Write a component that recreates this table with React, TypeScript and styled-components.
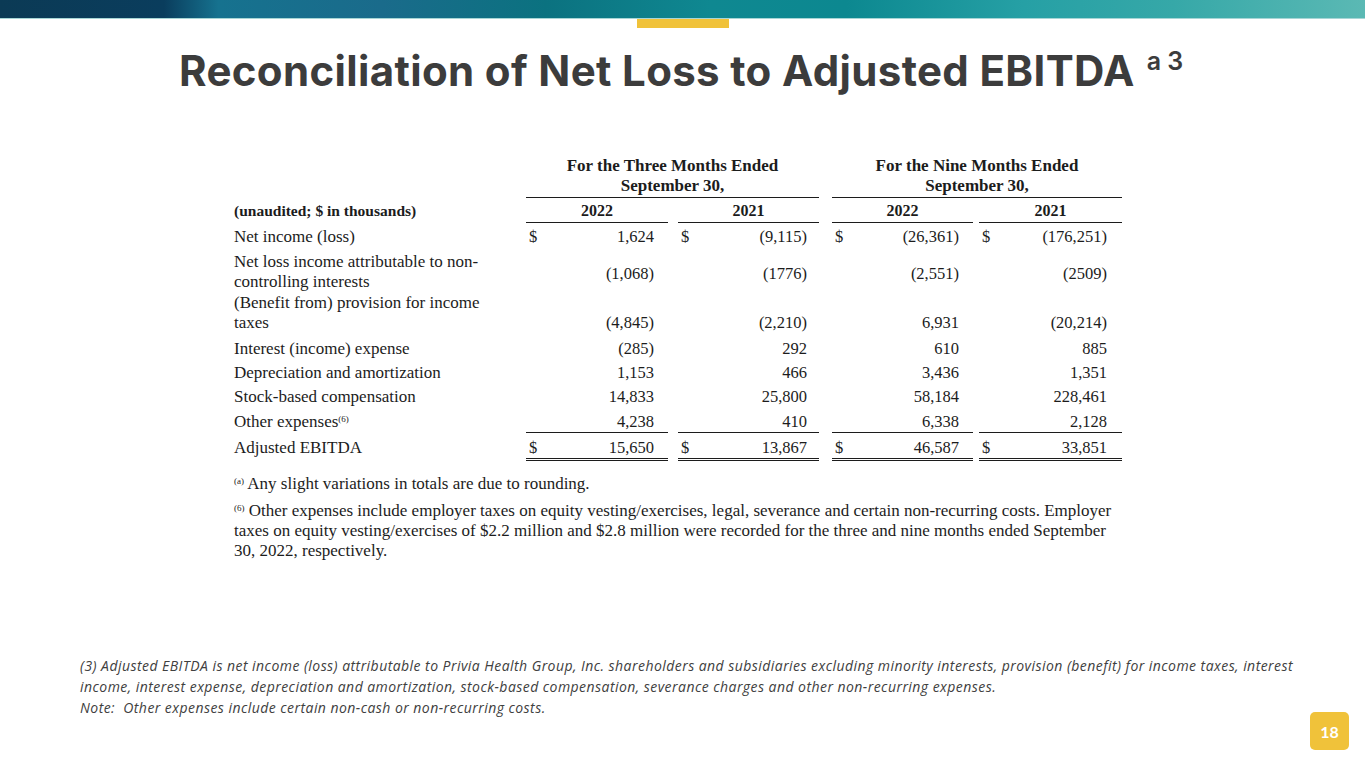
import React from "react";
import styled, { createGlobalStyle } from "styled-components";

const GlobalStyle = createGlobalStyle`
  html, body { margin: 0; padding: 0; background: #ffffff; }
  #root { width: 1365px; }
`;

const COLS = "292px 142px 151px 154px 149px";

const Slide = styled.div`
  width: 1365px;
  height: 768px;
  overflow: hidden;
  background: #ffffff;
  display: flex;
  flex-direction: column;
`;

const TopBar = styled.div`
  height: 18px;
  flex: none;
  background: linear-gradient(
    90deg,
    #0b3a55 0%,
    #0a3d5d 12%,
    #16728f 16%,
    #1a6b8b 28%,
    #0b7280 40%,
    #0f8891 52%,
    #0c8890 62%,
    #26a0a5 75%,
    #36a8a8 86%,
    #5bb9b4 100%
  );
  border-bottom: 1px solid #a7d6d6;
`;

const Tab = styled.div`
  width: 92px;
  height: 9px;
  flex: none;
  margin: 0 auto;
  background: #f0c23a;
`;

const Title = styled.h1`
  margin: 19px 0 0 179px;
  font-family: Inter, "Open Sans", sans-serif;
  font-weight: 700;
  font-size: 42px;
  letter-spacing: 0.35px;
  line-height: 48px;
  color: #3c3c3c;
  white-space: nowrap;
`;

const TitleSup = styled.sup`
  font-size: 25px;
  font-weight: 600;
  letter-spacing: 0;
  vertical-align: 16px;
  margin-left: 12px;
  line-height: 0;
`;

const TableWrap = styled.div`
  margin: 61px 0 0 234px;
  font-family: "Liberation Serif", "Times New Roman", serif;
  font-size: 17px;
  color: #1c1c1c;
`;

const Row = styled.div`
  display: grid;
  grid-template-columns: ${COLS};
`;

const GroupHead = styled.div<{ $gap: number }>`
  grid-column: span 2;
  margin-left: ${(p) => p.$gap}px;
  text-align: center;
  font-weight: 700;
  line-height: 20px;
  padding-bottom: 1px;
  border-bottom: 1px solid #1c1c1c;
`;

const YearHead = styled.div<{ $gap: number }>`
  margin-left: ${(p) => p.$gap}px;
  text-align: center;
  font-weight: 700;
  font-size: 16px;
  line-height: 20px;
  padding: 3px 0 1px;
  border-bottom: 1px solid #1c1c1c;
`;

const UnitLabel = styled.div`
  font-weight: 700;
  font-size: 15.5px;
  line-height: 20px;
  padding-top: 3px;
  white-space: nowrap;
`;

const Label = styled.div<{ $pt: number; $pb: number }>`
  line-height: 20px;
  padding: ${(p) => p.$pt}px 0 ${(p) => p.$pb}px;
  white-space: nowrap;
`;

const FnSup = styled.sup`
  font-size: 9px;
  vertical-align: 5px;
  line-height: 0;
`;

const Amount = styled.div<{
  $gap: number;
  $pr: number;
  $rule?: "single" | "double";
  $shift: number;
}>`
  margin-left: ${(p) => p.$gap}px;
  padding: ${(p) => p.$shift}px ${(p) => p.$pr}px 0 3px;
  display: flex;
  justify-content: space-between;
  align-items: flex-start;
  font-size: 16.5px;
  line-height: 20px;
  white-space: nowrap;
  border-bottom: ${(p) =>
    p.$rule === "single" ? "1px solid #1c1c1c" : p.$rule === "double" ? "3px double #1c1c1c" : "none"};
`;

const Footnotes = styled.div`
  margin: 13px 0 0 234px;
  width: 900px;
  font-family: "Liberation Serif", "Times New Roman", serif;
  font-size: 17px;
  line-height: 20px;
  color: #1c1c1c;
  display: flex;
  flex-direction: column;
  gap: 7px;
`;

const Note = styled.p`
  margin: 0;
  white-space: nowrap;
`;

const Footer = styled.div`
  margin-top: 94px;
  display: flex;
  align-items: flex-start;
  justify-content: space-between;
`;

const Disclaimer = styled.p`
  margin: 0 0 0 80px;
  font-family: "Open Sans", Lato, sans-serif;
  font-style: italic;
  font-size: 14px;
  letter-spacing: 0.45px;
  line-height: 21px;
  color: #404040;
  white-space: nowrap;
`;

const PageBadge = styled.div`
  margin: 57px 16px 0 0;
  width: 39px;
  height: 38px;
  border-radius: 5px;
  background: #f0c23a;
  color: #ffffff;
  font-family: Lato, "Open Sans", sans-serif;
  font-weight: 700;
  font-size: 16px;
  display: flex;
  align-items: center;
  justify-content: center;
`;

type RowData = {
  label: React.ReactNode;
  values: [string, string, string, string];
  dollar?: boolean;
  pt: number;
  pb: number;
  shift: number;
  rule?: "single" | "double";
};

const GAPS = [0, 10, 13, 6];
const PRS = [14, 12, 14, 15];

const rows: RowData[] = [
  { label: "Net income (loss)", values: ["1,624", "(9,115)", "(26,361)", "(176,251)"], dollar: true, pt: 4, pb: 0, shift: 4 },
  {
    label: (
      <>
        Net loss income attributable to non-
        <br />
        controlling interests
      </>
    ),
    values: ["(1,068)", "(1776)", "(2,551)", "(2509)"],
    pt: 5,
    pb: 0,
    shift: 17,
  },
  {
    label: (
      <>
        (Benefit from) provision for income
        <br />
        taxes
      </>
    ),
    values: ["(4,845)", "(2,210)", "6,931", "(20,214)"],
    pt: 1,
    pb: 2,
    shift: 21,
  },
  { label: "Interest (income) expense", values: ["(285)", "292", "610", "885"], pt: 4, pb: 0, shift: 4 },
  { label: "Depreciation and amortization", values: ["1,153", "466", "3,436", "1,351"], pt: 4, pb: 0, shift: 4 },
  { label: "Stock-based compensation", values: ["14,833", "25,800", "58,184", "228,461"], pt: 4, pb: 0, shift: 4 },
  {
    label: (
      <>
        Other expenses<FnSup>(6)</FnSup>
      </>
    ),
    values: ["4,238", "410", "6,338", "2,128"],
    pt: 5,
    pb: 0,
    shift: 5,
    rule: "single",
  },
  { label: "Adjusted EBITDA", values: ["15,650", "13,867", "46,587", "33,851"], dollar: true, pt: 5, pb: 2, shift: 5, rule: "double" },
];

export default function App() {
  return (
    <>
      <GlobalStyle />
      <Slide>
        <TopBar />
        <Tab />
        <Title>
          Reconciliation of Net Loss to Adjusted EBITDA<TitleSup>a 3</TitleSup>
        </Title>

        <TableWrap>
          <Row>
            <div />
            <GroupHead $gap={0}>
              For the Three Months Ended
              <br />
              September 30,
            </GroupHead>
            <GroupHead $gap={13}>
              For the Nine Months Ended
              <br />
              September 30,
            </GroupHead>
          </Row>
          <Row>
            <UnitLabel>(unaudited; $ in thousands)</UnitLabel>
            <YearHead $gap={GAPS[0]}>2022</YearHead>
            <YearHead $gap={GAPS[1]}>2021</YearHead>
            <YearHead $gap={GAPS[2]}>2022</YearHead>
            <YearHead $gap={GAPS[3]}>2021</YearHead>
          </Row>
          {rows.map((r, i) => (
            <Row key={i}>
              <Label $pt={r.pt} $pb={r.pb}>
                {r.label}
              </Label>
              {r.values.map((v, j) => (
                <Amount key={j} $gap={GAPS[j]} $pr={PRS[j]} $rule={r.rule} $shift={r.shift}>
                  <span>{r.dollar ? "$" : ""}</span>
                  <span>{v}</span>
                </Amount>
              ))}
            </Row>
          ))}
        </TableWrap>

        <Footnotes>
          <Note>
            <FnSup>(a)</FnSup> Any slight variations in totals are due to rounding.
          </Note>
          <Note>
            <FnSup>(6)</FnSup> Other expenses include employer taxes on equity vesting/exercises, legal, severance and
            certain non-recurring costs. Employer
            <br />
            taxes on equity vesting/exercises of $2.2 million and $2.8 million were recorded for the three and nine months
            ended September
            <br />
            30, 2022, respectively.
          </Note>
        </Footnotes>

        <Footer>
          <Disclaimer>
            (3) Adjusted EBITDA is net income (loss) attributable to Privia Health Group, Inc. shareholders and subsidiaries
            excluding minority interests, provision (benefit) for income taxes, interest
            <br />
            income, interest expense, depreciation and amortization, stock-based compensation, severance charges and other
            non-recurring expenses.
            <br />
            Note:&nbsp; Other expenses include certain non-cash or non-recurring costs.
          </Disclaimer>
          <PageBadge>18</PageBadge>
        </Footer>
      </Slide>
    </>
  );
}
